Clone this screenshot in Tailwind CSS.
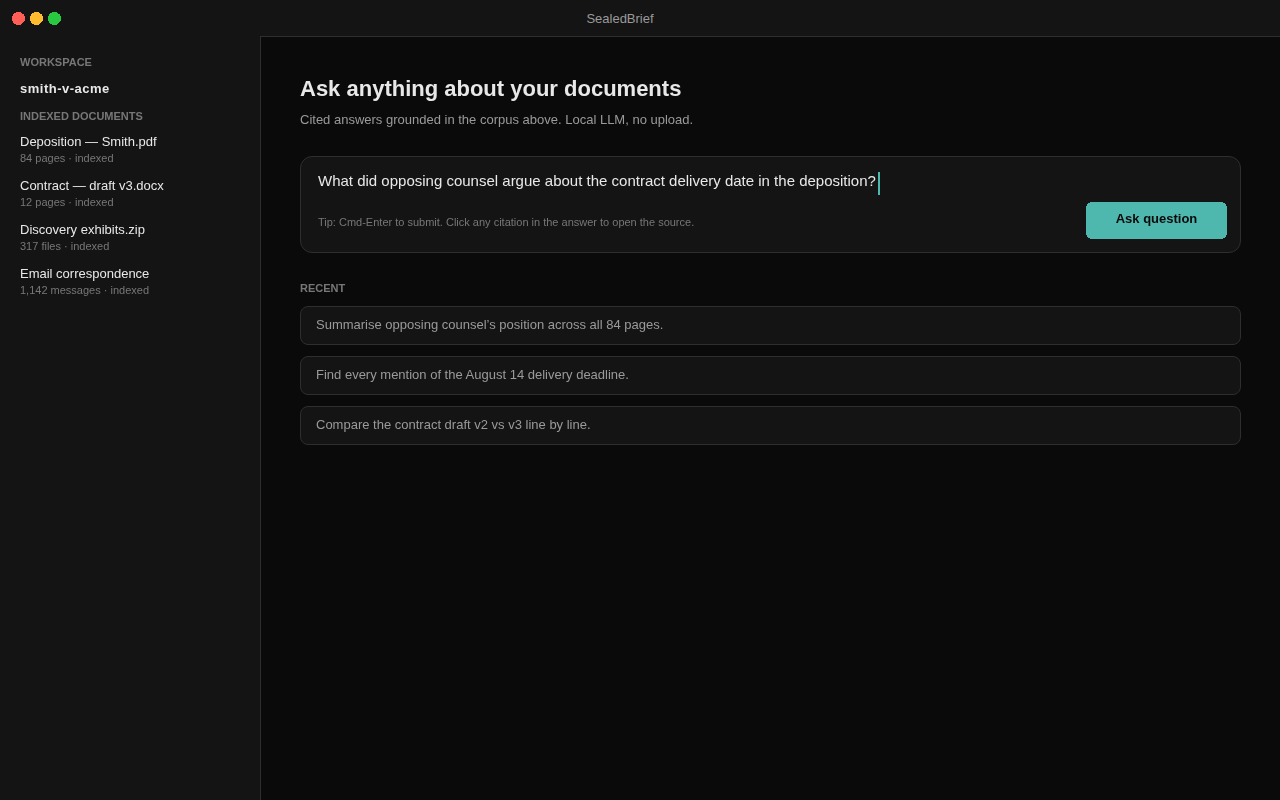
<!doctype html>
<html><head><meta charset="utf-8"><script src="https://cdn.jsdelivr.net/npm/@tailwindcss/browser@4"></script></head>
<body class="m-0 bg-[#0a0a0a] font-['Liberation_Sans',Arial,sans-serif]">
<div class="w-[1280px] h-[800px] overflow-hidden flex flex-col bg-[#141414]">
  <header class="relative h-9 shrink-0 flex items-center pl-3 gap-[5px] bg-[#141414]">
    <svg class="w-[13px] h-[13px]" viewBox="0 0 13 13" shape-rendering="crispEdges"><circle cx="6.5" cy="6.5" r="6.5" fill="#ff5f57"/></svg>
    <svg class="w-[13px] h-[13px]" viewBox="0 0 13 13" shape-rendering="crispEdges"><circle cx="6.5" cy="6.5" r="6.5" fill="#febc2e"/></svg>
    <svg class="w-[13px] h-[13px]" viewBox="0 0 13 13" shape-rendering="crispEdges"><circle cx="6.5" cy="6.5" r="6.5" fill="#28c840"/></svg>
    <span class="absolute left-0 right-10 top-px h-9 flex items-center justify-center text-[13px] text-[#9a9a9a]">SealedBrief</span>
  </header>
  <div class="flex flex-1 min-h-0">
    <aside class="w-[260px] shrink-0 bg-[#141414] pt-[19px] px-5 will-change-transform">
      <div class="text-[11px] leading-[14px] font-bold uppercase text-[#777777]">Workspace</div>
      <div class="mt-[12px] text-[13px] leading-[16px] tracking-[0.5px] font-bold text-[#e8e8e8]">smith-v-acme</div>
      <div class="mt-[12px] text-[11px] leading-[14px] font-bold uppercase text-[#777777]">Indexed documents</div>
      <ul class="mt-[11px] flex flex-col gap-[12px]">
        <li><div class="text-[13px] leading-[16px] text-[#e8e8e8]">Deposition — Smith.pdf</div><div class="text-[11px] leading-[16px] text-[#777777]">84 pages · indexed</div></li>
        <li><div class="text-[13px] leading-[16px] text-[#e8e8e8]">Contract — draft v3.docx</div><div class="text-[11px] leading-[16px] text-[#777777]">12 pages · indexed</div></li>
        <li><div class="text-[13px] leading-[16px] text-[#e8e8e8]">Discovery exhibits.zip</div><div class="text-[11px] leading-[16px] text-[#777777]">317 files · indexed</div></li>
        <li><div class="text-[13px] leading-[16px] text-[#e8e8e8]">Email correspondence</div><div class="text-[11px] leading-[16px] text-[#777777]">1,142 messages · indexed</div></li>
      </ul>
    </aside>
    <main class="flex-1 bg-[#0a0a0a] border-l border-t border-[#2e2e2e] pt-[39px] pl-[39px] pr-[39px] will-change-transform">
      <h1 class="text-[22px] leading-[26px] font-bold text-[#e8e8e8]">Ask anything about your documents</h1>
      <p class="mt-[10px] text-[13px] leading-[16px] text-[#9a9a9a]">Cited answers grounded in the corpus above. Local LLM, no upload.</p>
      <section class="mt-[28px] h-[97px] rounded-xl border border-[#2e2e2e] bg-[#141414] pt-[14px] pl-[17px] pr-[13px]">
        <div class="flex items-center h-[20px] text-[15px] text-[#e8e8e8]">What did opposing counsel argue about the contract delivery date in the deposition?<span class="ml-[2px] w-[2px] h-[23px] mt-[4px] bg-[#4fb8ae] inline-block"></span></div>
        <div class="mt-[11px] flex items-center justify-between">
          <span class="text-[11px] text-[#777777] mt-[3px]">Tip: Cmd-Enter to submit. Click any citation in the answer to open the source.</span>
          <button class="relative w-[141px] h-[37px] text-[13px] font-bold text-[#0a0a0a]">
            <svg class="absolute inset-0" width="141" height="37" viewBox="0 0 141 37" shape-rendering="crispEdges"><rect width="141" height="37" rx="6" fill="#4fb8ae"/></svg>
            <span class="relative block pb-[4px]">Ask question</span>
          </button>
        </div>
      </section>
      <h2 class="mt-[28px] text-[11px] leading-[14px] font-bold uppercase text-[#777777]">Recent</h2>
      <div class="mt-[11px] flex flex-col gap-[11px]">
        <div class="h-[39px] flex items-center px-[15px] pb-[2px] rounded-lg border border-[#2e2e2e] bg-[#141414] text-[13px] text-[#9a9a9a]">Summarise opposing counsel’s position across all 84 pages.</div>
        <div class="h-[39px] flex items-center px-[15px] pb-[2px] rounded-lg border border-[#2e2e2e] bg-[#141414] text-[13px] text-[#9a9a9a]">Find every mention of the August 14 delivery deadline.</div>
        <div class="h-[39px] flex items-center px-[15px] pb-[2px] rounded-lg border border-[#2e2e2e] bg-[#141414] text-[13px] text-[#9a9a9a]">Compare the contract draft v2 vs v3 line by line.</div>
      </div>
    </main>
  </div>
</div>
</body></html>
